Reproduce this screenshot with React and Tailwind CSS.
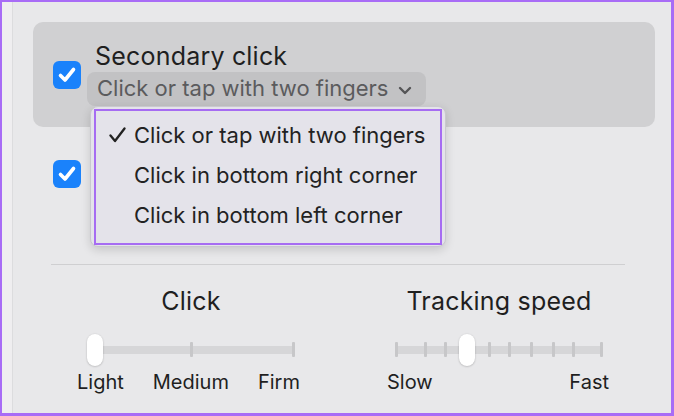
import React from "react";

const font = { fontFamily: "Inter, 'Noto Sans', sans-serif" };

function Checkbox() {
  return (
    <div className="w-[28px] h-[28px] rounded-[6px] bg-[#1a82fb] flex items-center justify-center shrink-0">
      <svg width="20" height="18" viewBox="0 0 20 18">
        <path d="M3.5 9.5 L8 14 L16.5 3.5" fill="none" stroke="white" strokeWidth="3.6" strokeLinecap="round" strokeLinejoin="round" />
      </svg>
    </div>
  );
}

function Tick({ left }) {
  return <div className="absolute top-[8px] w-[3px] h-[15px] bg-[#c7c7c9] rounded-[1px]" style={{ left }} />;
}

function Slider({ ticks, knob }) {
  return (
    <div className="relative w-[208px] h-[32px]">
      <div className="absolute left-0 right-0 top-[12px] h-[8px] bg-[#d6d6d8]" />
      {ticks.map((t) => (
        <Tick key={t} left={t} />
      ))}
      <div className="absolute top-0 w-[16px] h-[32px] rounded-full bg-white shadow-[0_0.5px_2px_rgba(0,0,0,0.25)]" style={{ left: knob }} />
    </div>
  );
}

export default function App() {
  return (
    <div className="w-[674px] h-[416px] overflow-hidden relative border-t-2 border-l-2 border-r-[3px] border-b-[3px] border-[#a86cf6] flex text-[#1f1f1f]" style={font}>
      <div className="w-[11px] bg-[#efeef0] border-r border-[#dcdcde] shrink-0" />
      <div className="flex-1 bg-[#e8e8ea] flex flex-col">
        <div className="mt-[20px] ml-[20px] w-[622px] h-[105px] rounded-[10px] bg-[#d0d0d2] flex items-center pl-[20px]">
          <Checkbox />
          <div className="ml-[6px] flex flex-col mt-[-4px]">
            <div className="ml-[8px] text-[25px] tracking-[0.2px] leading-[32px]">Secondary click</div>
            <div className="h-[34px] rounded-[8px] bg-[#c2c2c4] flex items-center pl-[10px] pr-[14px] text-[22px] text-[#5b5b5d]">
              <span>Click or tap with two fingers</span>
              <svg className="ml-[10px] mt-[3px]" width="14" height="9" viewBox="0 0 14 9">
                <path d="M2 2 L7 7 L12 2" fill="none" stroke="#545456" strokeWidth="2.4" strokeLinecap="round" strokeLinejoin="round" />
              </svg>
            </div>
          </div>
        </div>
        <div className="mt-[33px] ml-[40px]">
          <Checkbox />
        </div>
        <div className="mt-[76px] ml-[38px] w-[574px] h-[1px] bg-[#cfcfd1]" />
        <div className="flex mt-[21px] ml-[58px] gap-[68px]">
          <div className="w-[240px] flex flex-col items-center">
            <div className="text-[25px] tracking-[0.2px] leading-[30px]">Click</div>
            <div className="mt-[18px]">
              <Slider ticks={[102.5, 204.5]} knob={0} />
            </div>
            <div className="mt-[4px] self-start ml-[6px] w-[223px] flex justify-between text-[20px] leading-[24px]">
              <span>Light</span>
              <span>Medium</span>
              <span>Firm</span>
            </div>
          </div>
          <div className="w-[240px] flex flex-col items-center">
            <div className="text-[25px] tracking-[0.2px] leading-[30px]">Tracking speed</div>
            <div className="mt-[18px]">
              <Slider ticks={[0, 28.5, 48.5, 92.5, 112.5, 134.5, 156.5, 176.5, 204.5]} knob={64} />
            </div>
            <div className="mt-[4px] self-start ml-[8px] w-[222px] flex justify-between text-[20px] leading-[24px]">
              <span>Slow</span>
              <span>Fast</span>
            </div>
          </div>
        </div>
      </div>

      <div className="absolute left-[88px] top-[104px] w-[356px] h-[141px] rounded-[8px] bg-[#e4e3ea] border border-[#c9c8ce] shadow-[0_3px_10px_rgba(0,0,0,0.15)] pt-[8px] text-[22px] text-[#222]">
        <div className="absolute left-[3px] top-[2px] right-[3px] bottom-[1px] border-2 border-[#a66cf2]" />
        <div className="h-[40px] flex items-center">
          <svg className="ml-[18px] mr-[8px]" width="17" height="16" viewBox="0 0 17 16">
            <path d="M1.5 8.5 L6 14 L15.5 1.5" fill="none" stroke="#222" strokeWidth="2.3" strokeLinecap="round" strokeLinejoin="round" />
          </svg>
          <span>Click or tap with two fingers</span>
        </div>
        <div className="h-[40px] flex items-center pl-[43px]">Click in bottom right corner</div>
        <div className="h-[40px] flex items-center pl-[43px]">Click in bottom left corner</div>
      </div>
    </div>
  );
}
